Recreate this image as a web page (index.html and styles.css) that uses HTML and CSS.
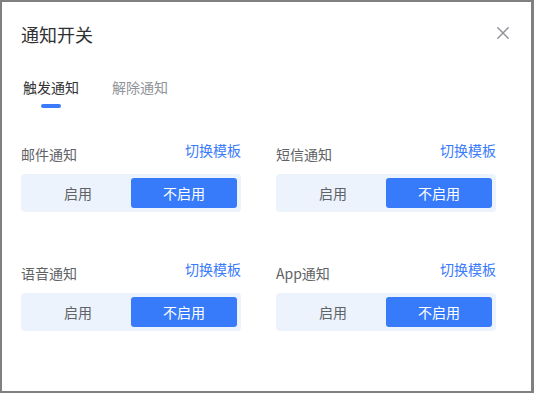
FILE: index.html
```html
<!DOCTYPE html>
<html lang="zh-CN">
<head>
<meta charset="utf-8">
<title>通知开关</title>
<link rel="stylesheet" href="styles.css">
</head>
<body>
<div class="dialog">
  <div class="dialog-header">
    <div class="dialog-title">通知开关</div>
    <button class="close-btn" aria-label="关闭">
      <svg width="12" height="12" viewBox="0 0 12 12"><path d="M0.8 0.8 L11.2 11.2 M11.2 0.8 L0.8 11.2" stroke="#8d9096" stroke-width="1.4" stroke-linecap="round" fill="none"/></svg>
    </button>
  </div>
  <div class="tabs">
    <div class="tab active">触发通知<span class="tab-bar"></span></div>
    <div class="tab">解除通知</div>
  </div>
  <div class="grid">
    <div class="item">
      <div class="item-head"><span class="item-label">邮件通知</span><a class="item-link">切换模板</a></div>
      <div class="switch"><span class="opt">启用</span><span class="opt on">不启用</span></div>
    </div>
    <div class="item">
      <div class="item-head"><span class="item-label">短信通知</span><a class="item-link">切换模板</a></div>
      <div class="switch"><span class="opt">启用</span><span class="opt on">不启用</span></div>
    </div>
    <div class="item">
      <div class="item-head"><span class="item-label">语音通知</span><a class="item-link">切换模板</a></div>
      <div class="switch"><span class="opt">启用</span><span class="opt on">不启用</span></div>
    </div>
    <div class="item">
      <div class="item-head"><span class="item-label">App通知</span><a class="item-link">切换模板</a></div>
      <div class="switch"><span class="opt">启用</span><span class="opt on">不启用</span></div>
    </div>
  </div>
</div>
</body>
</html>
```
FILE: styles.css
```css
* { box-sizing: border-box; }
html, body { margin: 0; padding: 0; }
body {
  background: #808080;
  width: 534px;
  height: 393px;
  overflow: hidden;
  font-family: "Noto Sans CJK SC", "Noto Sans", sans-serif;
}
.dialog {
  margin: 2px 0 0 2px;
  width: 529px;
  height: 389px;
  background: #ffffff;
  padding: 20px 22px 0 19px;
}
.dialog-header {
  display: flex;
  justify-content: space-between;
  align-items: flex-start;
}
.dialog-title {
  font-size: 18px;
  line-height: 24px;
  color: #303133;
}
.close-btn {
  border: 0;
  background: none;
  padding: 0;
  margin-top: 4.5px;
  width: 12px;
  height: 12px;
  display: block;
}
.close-btn svg { display: block; }
.tabs {
  display: flex;
  gap: 33px;
  margin-top: 31px;
  padding-left: 2px;
  height: 30px;
}
.tab {
  position: relative;
  font-size: 14px;
  line-height: 20px;
  color: #909399;
}
.tab.active { color: #303133; }
.tab-bar {
  position: absolute;
  left: 50%;
  top: 27px;
  width: 20px;
  height: 3.5px;
  margin-left: -10px;
  border-radius: 2px;
  background: #3a7bfb;
}
.grid {
  margin-top: 33px;
  display: grid;
  grid-template-columns: 220px 220px;
  column-gap: 35px;
  row-gap: 47px;
}
.item-head {
  display: flex;
  justify-content: space-between;
  align-items: flex-start;
  height: 24px;
  margin-bottom: 10px;
}
.item-label {
  margin-top: 4px;
  font-size: 14px;
  line-height: 20px;
  color: #606266;
}
.item-link {
  font-size: 14px;
  line-height: 20px;
  color: #3a7bfb;
  cursor: pointer;
}
.switch {
  display: flex;
  height: 38px;
  padding: 4px;
  border-radius: 4px;
  background: #ecf3fc;
}
.opt {
  flex: 1;
  display: flex;
  align-items: center;
  justify-content: center;
  font-size: 14px;
  color: #606266;
  border-radius: 3px;
}
.opt.on {
  background: #377bfb;
  color: #ffffff;
}
```
